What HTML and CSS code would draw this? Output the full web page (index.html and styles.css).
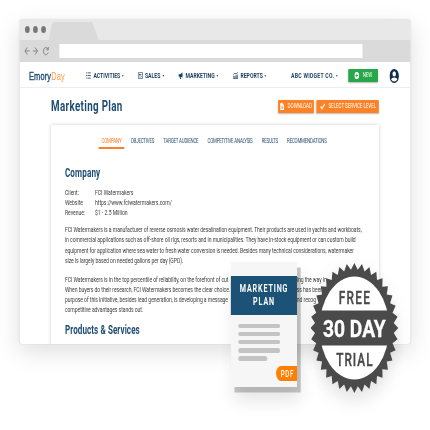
FILE: index.html
```html
<!DOCTYPE html>
<html lang="en">
<head>
<meta charset="utf-8">
<title>EmoryDay Marketing Plan</title>
<link rel="stylesheet" href="styles.css">
</head>
<body>
<div class="frame">
<div class="stage">
  <section class="window">
    <div class="tabbar">
      <i class="dot"></i><i class="dot"></i><i class="dot"></i>
      <svg class="tab" viewBox="0 0 74 18" width="74" height="18"><path d="M0 18 5 2Q6 0 8 0H63Q65 0 66 2L74 18Z" fill="#dadada"/></svg>
    </div>
    <div class="toolbar">
      <svg width="38" height="10" viewBox="0 0 38 10" fill="none" stroke="#777" stroke-width="1"><path d="M8 5H1M4.500 1.500 1 5l3.500 3.500M12.500 5h7M16 1.500 19.500 5 16 8.500M35 3.300A3.600 3.600 0 1 0 35.300 6.500M35.500 1v2.800h-3"/></svg>
      <div class="url"></div>
    </div>
    <nav class="nav">
      <div class="logo">Emory<span>Day</span></div>
      <div class="item"><svg class="icon" viewBox="0 0 8 8"><path d="M0 1h1.500M2.500 1H8M0 4h1.500M2.500 4H8M0 7h1.500M2.500 7H8" stroke="#173d5e" stroke-width="1.100"/></svg><span>ACTIVITIES</span><i class="caret"></i></div>
      <div class="item"><svg class="icon" viewBox="0 0 8 8" fill="none" stroke="#173d5e"><path d="M.5.5h7v7h-7zM2 5.800h2.500M5.500 3h1M5.500 5h1" stroke-width=".8"/><circle cx="3.200" cy="3" r=".8" fill="#173d5e"/></svg><span>SALES</span><i class="caret"></i></div>
      <div class="item"><svg class="icon" viewBox="0 0 8 8" fill="#173d5e"><path d="M0 2.500h3L6.500.3v6.400L3.500 5 4.300 8H2.500L1.700 5H0zM7 2.500q1 1 0 2z"/></svg><span>MARKETING</span><i class="caret"></i></div>
      <div class="item"><svg class="icon" viewBox="0 0 8 8" fill="none" stroke="#173d5e"><path d="M0 7.500h8M1 7V4M3 7V4.500M5 7V3.500M7 7V3M.5 3 3 1.200 5 2.500 7.500.3" stroke-width="1"/></svg><span>REPORTS</span><i class="caret"></i></div>
      <div class="item account"><span>ABC WIDGET CO.</span><i class="caret"></i></div>
      <div class="btn new"><svg width="7" height="7" viewBox="0 0 8 8"><circle cx="4" cy="4" r="4" fill="#fff"/><path d="M4 2v4M2 4h4" stroke="#27a74a" stroke-width="1.300"/></svg><span>NEW</span></div>
      <svg class="user" width="14" height="14" viewBox="0 0 14 14"><circle cx="7" cy="7" r="7" fill="#0c2c49"/><circle cx="7" cy="4.900" r="2.600" fill="#fff"/><path d="M2.300 10.200Q3.300 8.400 7 8.400T11.700 10.200Q10 12.400 7 12.400T2.300 10.200Z" fill="#fff"/></svg>
    </nav>
    <div class="heading">
      <h1>Marketing Plan</h1>
      <div class="btn dl"><svg width="6" height="7" viewBox="0 0 6 7"><path d="M0 0h3.500L6 2.500V7H0z" fill="#fff"/><path d="M3 2.500v3M1.700 4.300 3 5.600l1.300-1.300" fill="none" stroke="#ff8126" stroke-width=".8"/></svg><span>DOWNLOAD</span></div>
      <div class="btn sel"><svg width="8" height="7" viewBox="0 0 8 7"><path d="M1 3.500 3 5.700 7 1" fill="none" stroke="#fff" stroke-width="1.500"/></svg><span>SELECT SERVICE LEVEL</span></div>
    </div>
    <main class="card">
      <div class="tabs"><span class="on">COMPANY</span><span>OBJECTIVES</span><span>TARGET AUDIENCE</span><span>COMPETITIVE ANALYSIS</span><span>RESULTS</span><span>RECOMMENDATIONS</span></div>
      <h2>Company</h2>
      <dl><dt>Client:</dt><dd>FCI Watermakers</dd><dt>Website</dt><dd>https://www.fciwatermakers.com/</dd><dt>Revenue:</dt><dd>$1 - 2.5 Million</dd></dl>
      <p>FCI Watermakers is a manufacturer of reverse osmosis water desalination equipment. Their products are used in yachts and workboats,<br>in commercial applications such as off-shore oil rigs, resorts and in municipalities. They have in-stock equipment or can custom build<br>equipment for application where sea water to fresh water conversion is needed. Besides many technical considerations, watermaker<br>size is largely based on needed gallons per day (GPD).</p>
      <div class="wrapped">
        <span>FCI Watermakers is in the top percentile of reliability, on the forefront of cut</span><span>ing the way in</span>
        <span>When buyers do their research, FCI Watermakers becomes the clear choice.</span><span>ss has been</span>
        <span>purpose of this initiative, besides lead generation, is developing a message</span><span>nd recog</span>
        <span>competitive advantages stands out.</span>
      </div>
      <h2 class="products">Products &amp; Services</h2>
    </main>
  </section>

  <aside class="doc">
    <div class="cover">MARKETING<br>PLAN</div>
    <div class="lines"><i></i><i></i><i></i><i></i><i></i></div>
    <div class="pdf">PDF</div>
  </aside>

  <svg class="seal" width="130" height="130" viewBox="-65 -65 130 130">
    <polygon id="teeth" fill="#4a4a4a"/>
    <circle r="51.500" fill="#fff"/>
    <path d="M-55-17.500H55V17.500H-55Z" fill="#4a4a4a"/>
    <g text-anchor="middle" font-family="Roboto, sans-serif">
      <text class="sealword" x="0" y="-24.500" textLength="46">FREE</text>
      <text class="sealmain" x="0" y="8.700" textLength="93" lengthAdjust="spacingAndGlyphs">30 DAY</text>
      <text class="sealword" x="0" y="37.700" textLength="54">TRIAL</text>
    </g>
  </svg>
</div>
</div>
<script src="seal.js"></script>
</body>
</html>
```
FILE: styles.css
```css
* { box-sizing: border-box; }
html, body { margin: 0; background: #fff; }
.frame { width: 430px; height: 430px; overflow: hidden; }
.stage {
  position: relative; width: 637px; height: 430px; padding: 18.700px 0 0 29.200px;
  transform: scaleX(.675); transform-origin: 0 0;
  font-family: Roboto, sans-serif; color: #3c3c3c;
}
.window {
  width: 578.700px; height: 325.300px; border-radius: 4px; overflow: hidden; background: #fff;
  box-shadow: 0 8px 28px rgba(0,0,0,.13), 0 0 2px rgba(0,0,0,.12);
}
.tabbar { height: 21.300px; background: #e8e8e8; display: flex; align-items: center; padding-left: 7.500px; gap: 5.400px; }
.dot { width: 7px; height: 7px; border-radius: 50%; background: #777; }
.tab { align-self: flex-end; margin-left: -2px; }
.toolbar { height: 22px; background: #dadada; display: flex; align-items: center; padding-left: 7px; }
.url { width: 449px; height: 13.700px; background: #fff; margin-left: 14.300px; }
.nav {
  height: 26px; border-bottom: 1.500px solid #eee; padding-left: 13.800px; display: grid; align-items: center;
  grid-template-columns: 84.400px 76.300px 60px 81.500px 85.900px 85.200px 60.700px 14px;
}
.logo { font: 11px/14px "Liberation Sans", sans-serif; color: #1c4c74; letter-spacing: .2px; -webkit-text-stroke: .4px; padding-top: 4px; }
.logo span { color: #ff9b45; -webkit-text-stroke: 0; }
.item { display: flex; align-items: center; font-size: 7.600px; font-weight: 700; color: #173d5e; white-space: nowrap; padding-top: 3px; }
.account { letter-spacing: .4px; }
.icon { width: 8px; height: 7px; margin-right: 3px; }
.caret { border: 1.500px solid transparent; border-top: 2px solid #173d5e; border-bottom: 0; margin-left: 3px; }
.btn { height: 13.500px; display: flex; align-items: center; justify-content: center; gap: 5px; color: #fff; font-size: 6.800px; letter-spacing: -.12px; background: #ff8126; border-radius: 1px; box-shadow: 0 1px 2px rgba(0,0,0,.28); white-space: nowrap; }
.new { width: 44px; margin-top: 2px; background: #27a74a; font-size: 6.500px; }
.user { margin-top: 3px; }
.heading { height: 37px; display: flex; align-items: center; padding-left: 46.500px; }
h1 { font: 700 14.500px Roboto, sans-serif; color: #1c4c74; margin: 0 auto 0 0; letter-spacing: .5px; }
.dl { width: 53.500px; margin-right: 4px; }
.sel { width: 92px; margin-right: 46.500px; }
.card { width: 486px; height: 230px; margin-left: 46.500px; padding: 10px 0 0 20.500px; box-shadow: 0 0 4px rgba(0,0,0,.22); }
.tabs { display: flex; gap: 13.500px; padding-left: 54px; font-size: 6.500px; line-height: 13px; height: 11px; letter-spacing: -.27px; color: #2d5274; white-space: nowrap; }
.on { color: #ff7a1a; position: relative; letter-spacing: -.1px; }
.on::after { content: ""; position: absolute; left: -4px; right: -4px; top: 12.500px; height: 1.300px; background: #ff8126; }
h2 { font: 700 12px/14px Roboto, sans-serif; color: #1c4c74; margin: 20px 0 0; letter-spacing: .2px; }
dl { display: grid; grid-template-columns: 44.500px 1fr; margin: 8px 0 0; font-size: 7.500px; line-height: 10.200px; letter-spacing: -.02px; }
dd { margin: 0; }
p, .wrapped { margin: 6.700px 0 0; font-size: 7.500px; line-height: 10.200px; letter-spacing: -.085px; white-space: nowrap; }
.wrapped { margin-top: 8.500px; display: grid; grid-template-columns: 343.500px 1fr; }
h2.products { margin-top: 8px; letter-spacing: .1px; }
.doc { position: absolute; left: 342.200px; top: 262px; width: 98px; height: 125px; background: #f6f6f6; box-shadow: 5.500px 5.500px 0 rgba(0,0,0,.22), 4px 14px 20px rgba(0,0,0,.1); padding-top: 13.800px; }
.cover { height: 39px; background: #1c5275; color: #fff; text-align: center; font-size: 10.500px; font-weight: 500; line-height: 13px; letter-spacing: 1.400px; padding-top: 6px; -webkit-text-stroke: .2px; }
.lines { display: grid; gap: 3.600px; padding: 9px 0 0 10.500px; }
.lines i { width: 62.500px; height: 4.500px; border-radius: 3px; background: #c4c4c4; }
.lines i:last-child { width: 43.500px; }
.pdf { margin: 5px 0 0 auto; width: 31px; height: 15.500px; background: #ff8000; border-radius: 8px 0 0 8px; color: #fff; font-size: 9px; font-weight: 500; line-height: 16px; text-align: center; letter-spacing: .9px; padding-left: 2px; }
.seal { position: absolute; left: 459.500px; top: 262.500px; filter: drop-shadow(0 8px 10px rgba(0,0,0,.12)); }
.sealword { font-size: 17.500px; font-weight: 500; fill: #4a4a4a; stroke: #4a4a4a; stroke-width: .4px; }
.sealmain { font-size: 24px; font-weight: 700; fill: #fff; stroke: #fff; stroke-width: .3px; }
```
FILE: seal.js
```js
// Alternate tip and notch radii to form the serrated edge.
const teeth = 36;
const points = [];
for (let i = 0; i < teeth * 2; i++) {
  const r = i % 2 ? 58.5 : 65;
  const a = Math.PI * i / teeth - Math.PI / 2;
  points.push((r * Math.cos(a)).toFixed(2) + "," + (r * Math.sin(a)).toFixed(2));
}
document.getElementById("teeth").setAttribute("points", points.join(" "));
```
